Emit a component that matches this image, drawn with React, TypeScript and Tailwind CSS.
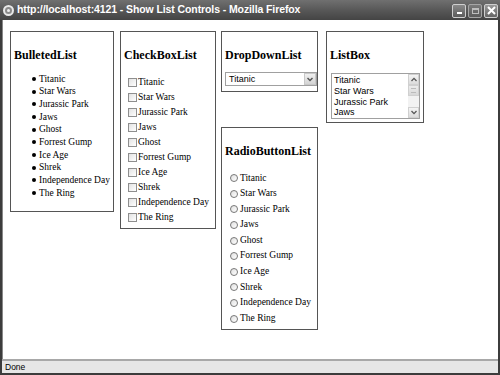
import React from "react";

const movies = [
  "Titanic",
  "Star Wars",
  "Jurassic Park",
  "Jaws",
  "Ghost",
  "Forrest Gump",
  "Ice Age",
  "Shrek",
  "Independence Day",
  "The Ring",
];

const serif = { fontFamily: '"Liberation Serif", "Times New Roman", serif' };
const sans = { fontFamily: '"Liberation Sans", Arial, sans-serif' };

function Title({ children }: { children: React.ReactNode }) {
  return (
    <div className="text-[12px] font-bold leading-[14px] text-black whitespace-nowrap" style={serif}>
      {children}
    </div>
  );
}

export default function App() {
  return (
    <div className="w-[500px] h-[375px] flex flex-col bg-[#3c3c3c] overflow-hidden">
      {/* Title bar */}
      <div className="h-[20px] flex items-center bg-gradient-to-b from-[#707070] via-[#585858] to-[#444444] pl-[3px] pr-[2px]">
        <div className="w-[11px] h-[11px] rounded-full border-[2px] border-[#e8e8e8] bg-[#8a8a8a] flex items-center justify-center">
          <div className="w-[3px] h-[3px] rounded-full bg-[#eee]" />
        </div>
        <div className="ml-[3px] text-[10.5px] font-bold text-white whitespace-nowrap tracking-[-0.1px]" style={sans}>
          http://localhost:4121 - Show List Controls - Mozilla Firefox
        </div>
        <div className="flex-1" />
        <div className="flex gap-[2px] mt-[1px]">
          <div className="w-[14px] h-[14px] border border-[#cfcfcf] rounded-[2px] bg-gradient-to-b from-[#8a8a8a] to-[#5c5c5c] flex items-end justify-center pb-[3px]">
            <div className="w-[5px] h-[2px] bg-white" />
          </div>
          <div className="w-[14px] h-[14px] border border-[#a5a5a5] rounded-[2px] bg-gradient-to-b from-[#7a7a7a] to-[#5a5a5a] flex items-center justify-center">
            <div className="w-[7px] h-[6px] border border-[#bdbdbd] border-t-2" />
          </div>
          <div className="w-[14px] h-[14px] border border-[#cfcfcf] rounded-[2px] bg-gradient-to-b from-[#9a9a9a] to-[#666] flex items-center justify-center">
            <svg width="9" height="9" viewBox="0 0 9 9">
              <path d="M1 1 L8 8 M8 1 L1 8" stroke="white" strokeWidth="2" />
            </svg>
          </div>
        </div>
      </div>

      {/* Body */}
      <div className="flex-1 flex px-[2px]">
        <div className="flex-1 bg-white border-l border-[#888] flex items-start pt-[11px] pl-[7px]" style={serif}>
          {/* BulletedList */}
          <div className="w-[104px] border border-[#555] pt-[16px] pl-[3px] pb-[11px]">
            <Title>BulletedList</Title>
            <ul className="mt-[10.5px] pl-[18px] text-[9.5px] leading-[12.7px] text-black">
              {movies.map((m) => (
                <li key={m} className="flex items-center whitespace-nowrap">
                  <span className="w-[4px] h-[4px] rounded-full bg-black mr-[3px] shrink-0" />
                  {m}
                </li>
              ))}
            </ul>
          </div>

          {/* CheckBoxList */}
          <div className="ml-[6px] w-[96px] border border-[#555] pt-[16px] pl-[3px] pb-[3px]">
            <Title>CheckBoxList</Title>
            <div className="mt-[12.5px] pl-[4px] text-[9.5px] leading-[15px] text-black">
              {movies.map((m) => (
                <div key={m} className="flex items-center whitespace-nowrap">
                  <span className="w-[9px] h-[9px] border border-[#8e8e8e] bg-gradient-to-br from-[#e2e2e2] to-white mr-[1px] shrink-0" />
                  {m}
                </div>
              ))}
            </div>
          </div>

          {/* Column: DropDownList + RadioButtonList */}
          <div className="ml-[5px] flex flex-col">
            <div className="w-[97px] border border-[#555] pt-[16px] pl-[3px] pb-[5px]">
              <Title>DropDownList</Title>
              <div className="mt-[10px] w-[92px] h-[14px] border border-[#a0a0a0] flex items-center bg-white">
                <span className="flex-1 pl-[3px] text-[9px] leading-[12px] text-black" style={sans}>
                  Titanic
                </span>
                <div className="w-[12px] h-[12px] bg-gradient-to-b from-[#f0f0f0] to-[#d4d4d4] border border-[#c8c8c8] flex items-center justify-center">
                  <svg width="6" height="5" viewBox="0 0 6 5">
                    <path d="M0.5 1 L3 3.6 L5.5 1" stroke="#555" strokeWidth="1.4" fill="none" />
                  </svg>
                </div>
              </div>
            </div>

            <div className="mt-[35px] w-[97px] border border-[#555] pt-[16px] pl-[3px] pb-[3px]">
              <Title>RadioButtonList</Title>
              <div className="mt-[12.5px] pl-[5px] text-[9.5px] leading-[15.6px] text-black">
                {movies.map((m) => (
                  <div key={m} className="flex items-center whitespace-nowrap">
                    <span className="w-[8px] h-[8px] rounded-full border border-[#777] bg-gradient-to-br from-[#e0e0e0] to-white mr-[2px] shrink-0" />
                    {m}
                  </div>
                ))}
              </div>
            </div>
          </div>

          {/* ListBox */}
          <div className="ml-[8px] w-[98px] border border-[#555] pt-[16px] pl-[3px] pb-[3px]">
            <Title>ListBox</Title>
            <div className="mt-[11px] ml-[1px] w-[89px] h-[46px] border border-[#a0a0a0] flex bg-white">
              <div className="flex-1 pl-[2px] pt-[1px] text-[9px] leading-[10.8px] text-black" style={sans}>
                <div>Titanic</div>
                <div>Star Wars</div>
                <div>Jurassic Park</div>
                <div>Jaws</div>
              </div>
              <div className="w-[11px] flex flex-col bg-[#f2f2f2]">
                <div className="h-[11px] border border-[#d0d0d0] bg-gradient-to-b from-[#f4f4f4] to-[#dcdcdc] flex items-center justify-center">
                  <svg width="6" height="5" viewBox="0 0 6 5">
                    <path d="M0.5 4 L3 1.4 L5.5 4" stroke="#555" strokeWidth="1.3" fill="none" />
                  </svg>
                </div>
                <div className="h-[11px] border border-[#d0d0d0] bg-gradient-to-b from-[#ececec] to-[#d8d8d8] flex items-center justify-center">
                  <div className="w-[5px] h-[5px] border-y border-[#bbb]" />
                </div>
                <div className="flex-1" />
                <div className="h-[11px] border border-[#d0d0d0] bg-gradient-to-b from-[#f4f4f4] to-[#dcdcdc] flex items-center justify-center">
                  <svg width="6" height="5" viewBox="0 0 6 5">
                    <path d="M0.5 1 L3 3.6 L5.5 1" stroke="#555" strokeWidth="1.3" fill="none" />
                  </svg>
                </div>
              </div>
            </div>
          </div>
        </div>
      </div>

      {/* Status bar */}
      <div className="mx-[2px] h-[14px] bg-[#e6e6e6] border-t-2 border-[#a8a8a8] flex items-center pl-[3px]">
        <span className="text-[8.5px] text-black" style={sans}>
          Done
        </span>
      </div>
      <div className="h-[2px]" />
    </div>
  );
}
